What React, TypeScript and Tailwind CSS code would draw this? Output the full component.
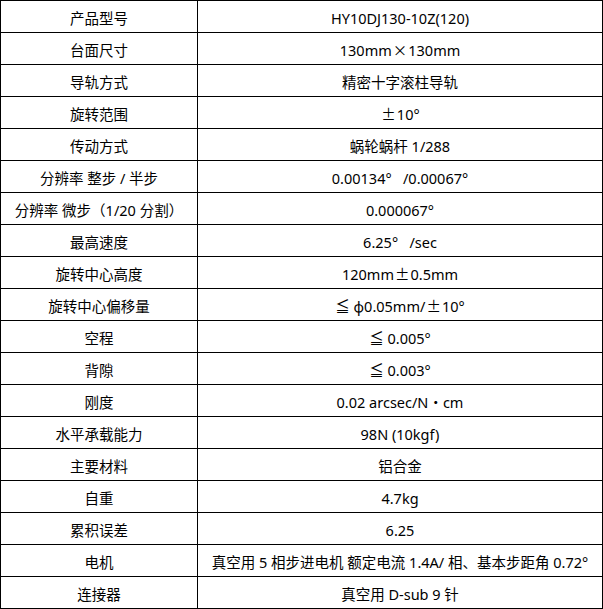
import React from "react";

const W = ({ c }: { c: string }) => (
  <span style={{ fontFamily: '"Noto Sans CJK JP", sans-serif' }} className="px-[1px]">
    {c}
  </span>
);

const rows: [string, React.ReactNode][] = [
  ["产品型号", "HY10DJ130-10Z(120)"],
  ["台面尺寸", <>130mm<W c="×" />130mm</>],
  ["导轨方式", "精密十字滚柱导轨"],
  ["旋转范围", <><W c="±" />10°</>],
  ["传动方式", "蜗轮蜗杆 1/288"],
  ["分辨率 整步 / 半步", "0.00134°\u00a0\u00a0 /0.00067°"],
  ["分辨率 微步（1/20 分割）", "0.000067°"],
  ["最高速度", "6.25°\u00a0\u00a0 /sec"],
  ["旋转中心高度", <>120mm<W c="±" />0.5mm</>],
  ["旋转中心偏移量", <>{"≦ φ0.05mm/"}<W c="±" />10°</>],
  ["空程", "≦ 0.005°"],
  ["背隙", "≦ 0.003°"],
  ["刚度", "0.02 arcsec/N・cm"],
  ["水平承载能力", "98N (10kgf)"],
  ["主要材料", "铝合金"],
  ["自重", "4.7kg"],
  ["累积误差", "6.25"],
  ["电机", "真空用 5 相步进电机 额定电流 1.4A/ 相、基本步距角 0.72°"],
  ["连接器", "真空用 D-sub 9 针"],
];

export default function App() {
  return (
    <div
      className="w-[603px] h-[609px] bg-white text-black"
      style={{ fontFamily: '"Noto Sans", "Noto Sans CJK SC", sans-serif' }}
    >
      <div className="grid grid-cols-[197px_405px] border-t border-l border-black text-[14.5px] leading-none">
        {rows.map(([k, v], i) => (
          <React.Fragment key={i}>
            <div className="h-[32px] border-r border-b border-black flex items-center justify-center pt-[3px] whitespace-pre">
              {k}
            </div>
            <div className="h-[32px] border-r border-b border-black flex items-center justify-center pt-[3px] whitespace-pre">
              {v}
            </div>
          </React.Fragment>
        ))}
      </div>
    </div>
  );
}
